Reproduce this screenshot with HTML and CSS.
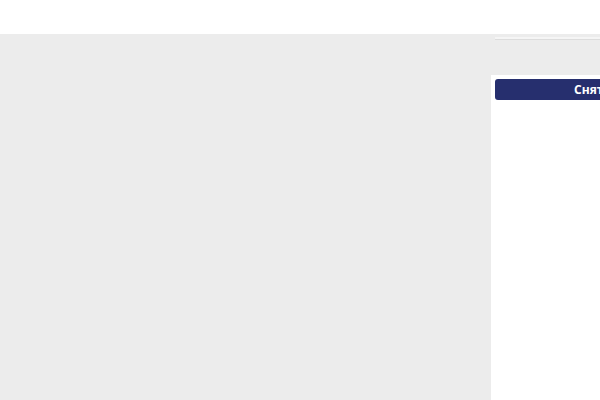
FILE: index.html
```html
<!DOCTYPE html>
<html lang="ru">
<head>
<meta charset="utf-8">
<link rel="stylesheet" href="styles.css">
</head>
<body>
<header class="header"></header>
<div class="main">
  <div class="content"></div>
  <aside class="sidebar">
    <div class="sidebar-top"><div class="rule"></div></div>
    <div class="panel">
      <button class="btn">Снять фильтры</button>
    </div>
  </aside>
</div>
</body>
</html>
```
FILE: styles.css
```css
html, body { margin: 0; padding: 0; }
body {
  width: 600px;
  height: 400px;
  overflow: hidden;
  background: #ececec;
  font-family: "Open Sans", "Liberation Sans", sans-serif;
}
.header { height: 34px; background: #ffffff; }
.main { display: flex; height: 366px; background: #ececec; }
.content { width: 491px; flex: none; }
.sidebar { flex: 1; min-width: 0; display: flex; flex-direction: column; overflow: hidden; }
.sidebar-top { height: 41px; flex: none; padding: 3px 0 0 4px; box-sizing: border-box; }
.rule { height: 2px; background: #f5f5f5; border-bottom: 1px solid #dcdcdc; }
.panel { flex: 1; background: #ffffff; padding: 4px; }
.btn {
  display: flex;
  align-items: center;
  justify-content: center;
  width: 256px;
  height: 21px;
  border: 0;
  border-radius: 3px;
  background: #262f6e;
  color: #ffffff;
  font-family: "Open Sans", "Liberation Sans", sans-serif;
  font-weight: 700;
  font-size: 12px;
  padding: 0;
  white-space: nowrap;
}
```
